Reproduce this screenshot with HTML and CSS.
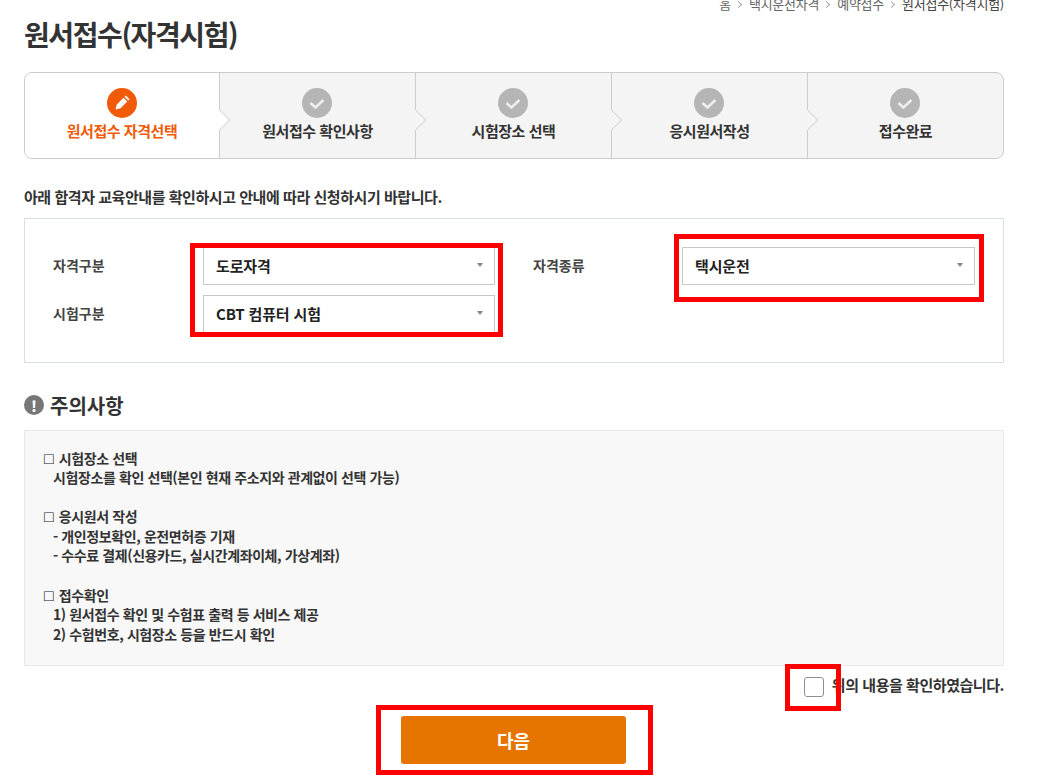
FILE: index.html
```html
<!DOCTYPE html>
<html lang="ko">
<head>
<meta charset="utf-8">
<title>원서접수(자격시험)</title>
<link rel="stylesheet" href="styles.css">
</head>
<body>
<main class="page">
  <nav class="crumbs">
    <span>홈</span><i class="sep"></i><span>택시운전자격</span><i class="sep"></i><span>예약접수</span><i class="sep"></i><span class="cur">원서접수(자격시험)</span>
  </nav>
  <h1 class="title">원서접수(자격시험)</h1>
  <ol class="steps">
    <li class="step active">
      <span class="badge"><svg viewBox="0 0 30 30" width="30" height="30"><path d="M8.600 21.400 9.800 16.400 16.500 9.700 20.300 13.500 13.600 20.200z" fill="#fff"/><path d="M17.500 8.700 18.800 7.400 22.600 11.200 21.300 12.500z" fill="#fff"/></svg></span>
      <span class="step-label">원서접수 자격선택</span>
    </li>
    <li class="step">
      <span class="badge"><svg viewBox="0 0 30 30" width="30" height="30"><path d="M8.500 15 13.500 19.500 21.500 12" fill="none" stroke="#eee" stroke-width="2.500"/></svg></span>
      <span class="step-label">원서접수 확인사항</span>
    </li>
    <li class="step">
      <span class="badge"><svg viewBox="0 0 30 30" width="30" height="30"><path d="M8.500 15 13.500 19.500 21.500 12" fill="none" stroke="#eee" stroke-width="2.500"/></svg></span>
      <span class="step-label">시험장소 선택</span>
    </li>
    <li class="step">
      <span class="badge"><svg viewBox="0 0 30 30" width="30" height="30"><path d="M8.500 15 13.500 19.500 21.500 12" fill="none" stroke="#eee" stroke-width="2.500"/></svg></span>
      <span class="step-label">응시원서작성</span>
    </li>
    <li class="step">
      <span class="badge"><svg viewBox="0 0 30 30" width="30" height="30"><path d="M8.500 15 13.500 19.500 21.500 12" fill="none" stroke="#eee" stroke-width="2.500"/></svg></span>
      <span class="step-label">접수완료</span>
    </li>
  </ol>
  <p class="lead">아래 합격자 교육안내를 확인하시고 안내에 따라 신청하시기 바랍니다.</p>
  <section class="form-box">
    <div class="field">
      <span class="field-label">자격구분</span>
      <div class="select"><span>도로자격</span><i class="caret"></i></div>
    </div>
    <div class="field">
      <span class="field-label">자격종류</span>
      <div class="select"><span>택시운전</span><i class="caret"></i></div>
    </div>
    <div class="field">
      <span class="field-label">시험구분</span>
      <div class="select"><span>CBT 컴퓨터 시험</span><i class="caret"></i></div>
    </div>
  </section>
  <h2 class="notice-title"><span class="warn">!</span>주의사항</h2>
  <section class="notes">
    <p><span class="sq">□</span> 시험장소 선택<br><span class="in">시험장소를 확인 선택(본인 현재 주소지와 관계없이 선택 가능)</span></p>
    <p><span class="sq">□</span> 응시원서 작성<br><span class="in">- 개인정보확인, 운전면허증 기재</span><br><span class="in">- 수수료 결제(신용카드, 실시간계좌이체, 가상계좌)</span></p>
    <p><span class="sq">□</span> 접수확인<br><span class="in">1) 원서접수 확인 및 수험표 출력 등 서비스 제공</span><br><span class="in">2) 수험번호, 시험장소 등을 반드시 확인</span></p>
  </section>
  <div class="agree">
    <span class="checkbox"></span><span>위의 내용을 확인하였습니다.</span>
  </div>
  <div class="actions"><button class="next" type="button">다음</button></div>
</main>
<div class="mark mark-a"></div>
<div class="mark mark-b"></div>
<div class="mark mark-c"></div>
<div class="mark mark-d"></div>
</body>
</html>
```
FILE: styles.css
```css
* { box-sizing: border-box; }
html, body { margin: 0; height: 100%; overflow: hidden; }
body {
  background: #fff;
  color: #333;
  font-family: "Noto Sans CJK KR", "Noto Sans", sans-serif;
  position: relative;
}
.page { width: 980px; margin-left: 24px; }
.crumbs {
  display: flex;
  justify-content: flex-end;
  align-items: center;
  height: 16px;
  margin-top: -4px;
  font-size: 13px;
  line-height: 16px;
  letter-spacing: -0.25px;
  color: #666;
}
.crumbs .cur { color: #444; }
.sep {
  width: 5px;
  height: 5px;
  margin: 0 8px 0 5px;
  border-top: 1px solid #aaa;
  border-right: 1px solid #aaa;
  transform: rotate(45deg);
}
.title {
  margin: 0;
  padding-top: 2px;
  height: 60px;
  font-size: 28px;
  line-height: 40px;
  font-weight: 700;
  letter-spacing: -1.4px;
  color: #333;
}
.steps {
  display: grid;
  grid-template-columns: 195px 196px 196px 196px 1fr;
  height: 87px;
  margin: 0;
  padding: 0;
  list-style: none;
  border: 1px solid #ccc;
  border-radius: 8px;
  background: #f4f4f4;
}
.step {
  position: relative;
  display: flex;
  flex-direction: column;
  align-items: center;
  padding-top: 15px;
  border-right: 1px solid #ccc;
}
.step:last-child { border-right: 0; }
.step::after {
  content: "";
  position: absolute;
  top: 39px;
  right: -8px;
  width: 15px;
  height: 15px;
  background: #f4f4f4;
  border-top: 1px solid #d8d8d8;
  border-right: 1px solid #d8d8d8;
  transform: rotate(45deg);
  z-index: 1;
}
.step:last-child::after { display: none; }
.step.active { background: #fff; border-radius: 7px 0 0 7px; }
.step.active::after { background: #fff; }
.badge {
  display: block;
  width: 30px;
  height: 30px;
  border-radius: 50%;
  background: #b5b5b5;
}
.step:not(.active) .badge { margin-right: 1px; }
.badge svg { display: block; }
.active .badge { background: #f15a09; }
.step-label {
  position: relative;
  z-index: 2;
  margin-top: 1px;
  font-size: 15px;
  line-height: 24px;
  font-weight: 700;
  letter-spacing: -0.03em;
  color: #333;
}
.active .step-label { color: #f15a09; }
.lead {
  margin: 27px 0 0;
  font-size: 15px;
  line-height: 22px;
  font-weight: 700;
  letter-spacing: -0.03em;
  color: #333;
}
.form-box {
  display: grid;
  grid-template-columns: 480px 1fr;
  grid-auto-rows: 38px;
  row-gap: 10px;
  align-content: start;
  height: 145px;
  margin-top: 10px;
  padding: 28px 28px 0 28px;
  border: 1px solid #d9dfe3;
}
.field { display: flex; align-items: center; }
.field-label {
  width: 150px;
  padding-bottom: 2px;
  font-size: 14px;
  font-weight: 700;
  color: #444;
}
.field:nth-child(2) .field-label { width: 149px; }
.select {
  display: flex;
  align-items: center;
  justify-content: space-between;
  width: 292px;
  height: 38px;
  padding: 0 11px 2px 12px;
  border: 1px solid #c8c8c8;
  font-size: 15px;
  font-weight: 700;
  letter-spacing: -0.01em;
  color: #222;
}
.field:nth-child(2) .select { width: 293px; }
.caret {
  width: 0;
  height: 0;
  border-left: 3.500px solid transparent;
  border-right: 3.500px solid transparent;
  border-top: 4px solid #888;
}
.notice-title {
  display: flex;
  align-items: center;
  height: 30px;
  margin: 27px 0 10px;
  font-size: 20px;
  font-weight: 700;
  color: #333;
}
.warn {
  display: inline-flex;
  align-items: center;
  justify-content: center;
  width: 20px;
  height: 20px;
  margin-right: 6px;
  border-radius: 50%;
  background: #777;
  color: #fff;
  font-size: 15px;
  font-weight: 900;
}
.notes {
  height: 236px;
  padding: 17.500px 19px 0;
  border: 1px solid #e9e9e9;
  background: #f8f8f8;
  font-size: 14px;
  line-height: 19.600px;
  font-weight: 700;
  letter-spacing: -0.4px;
  color: #333;
}
.notes p { margin: 0 0 19.600px; }
.sq {
  margin-right: 2px;
  font-family: "Liberation Sans", sans-serif;
  font-size: 16px;
  line-height: 1;
  color: #222;
}
.in { padding-left: 9px; }
.agree {
  display: flex;
  justify-content: flex-end;
  align-items: center;
  height: 38px;
  padding-bottom: 2px;
  font-size: 15px;
  font-weight: 700;
  letter-spacing: -0.03em;
  color: #333;
}
.checkbox {
  width: 20px;
  height: 20px;
  margin: 5px 8px 0 0;
  background: #fff;
  border: 1px solid #8f8f8f;
  border-radius: 3px;
}
.actions { display: flex; justify-content: center; margin-top: 12px; padding-right: 1px; }
.next {
  width: 225px;
  height: 48px;
  border: 0;
  border-radius: 3px;
  background: #e67500;
  color: #fff;
  font: 700 18px "Noto Sans CJK KR", sans-serif;
}
.mark { position: absolute; border: 5px solid #f00; pointer-events: none; }
.mark-a { left: 190px; top: 243px; width: 313px; height: 94px; }
.mark-b { left: 674px; top: 234px; width: 310px; height: 68px; }
.mark-c { left: 785px; top: 664px; width: 56px; height: 47px; }
.mark-d { left: 376px; top: 705px; width: 277px; height: 70px; }
```
